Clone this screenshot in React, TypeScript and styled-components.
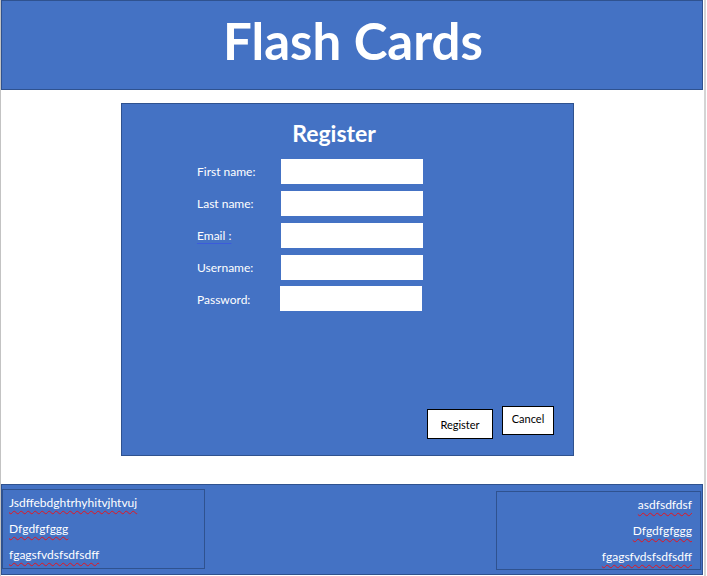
import React from "react";
import styled, { createGlobalStyle } from "styled-components";

const Global = createGlobalStyle`
  html, body { margin: 0; padding: 0; background: #ffffff; }
  body { font-family: Lato, "Open Sans", sans-serif; }
  * { box-sizing: border-box; }
`;

const BLUE = "#4472C4";
const DARK = "#2F528F";

const Page = styled.div`
  width: 706px;
  height: 576px;
  border-left: 1px solid #c3c3c3;
  border-right: 2px solid #d4d4d4;
  padding-right: 1px;
  display: flex;
  flex-direction: column;
`;

const Header = styled.header`
  height: 90px;
  background: ${BLUE};
  border: 1px solid ${DARK};
  display: flex;
  align-items: center;
  justify-content: center;
`;

const Title = styled.h1`
  margin: 0;
  color: #fff;
  font-family: Lato, sans-serif;
  font-weight: 700;
  font-size: 51px;
  line-height: 1;
  padding: 0 0 9px 2px;
`;

const Main = styled.main`
  height: 394px;
  padding: 13px 0 0 120px;
`;

const Panel = styled.section`
  width: 453px;
  height: 353px;
  background: ${BLUE};
  border: 1px solid ${DARK};
  display: flex;
  flex-direction: column;
  padding: 12px 19px 16px 75px;
`;

const PanelTitle = styled.h2`
  margin: 0 0 9px -75px;
  width: 452px;
  text-align: center;
  color: #fff;
  font-weight: 700;
  font-size: 23px;
  line-height: 34px;
  padding-right: 28px;
`;

const Form = styled.div`
  display: grid;
  grid-template-columns: 84px 142px;
  grid-template-rows: 25px 25px 25px 25px 25px;
  row-gap: 7px;
  align-items: center;
`;

const Label = styled.label<{ $grammar?: boolean }>`
  color: #fff;
  font-size: 12px;
  line-height: 25px;
  span {
    text-decoration: ${(p) => (p.$grammar ? "underline solid #3b5bdb" : "none")};
    text-underline-offset: 3px;
  }
`;

const Field = styled.div<{ $shift?: number }>`
  width: 142px;
  height: 25px;
  background: #fff;
  margin-left: ${(p) => p.$shift ?? 0}px;
  margin-top: ${(p) => (p.$shift ? -2 : 0)}px;
`;

const Buttons = styled.div`
  margin-top: auto;
  display: flex;
  justify-content: flex-end;
  align-items: flex-start;
  gap: 9px;
`;

const Button = styled.button<{ $w: number; $h: number; $top?: number; $pt?: number }>`
  width: ${(p) => p.$w}px;
  height: ${(p) => p.$h}px;
  margin-top: ${(p) => p.$top ?? 0}px;
  background: #fff;
  border: 1px solid #000;
  color: #000;
  font-family: Lato, sans-serif;
  font-size: 11px;
  padding: ${(p) => p.$pt ?? 0}px 0 0 0;
  display: flex;
  align-items: ${(p) => (p.$pt ? "flex-start" : "center")};
  justify-content: center;
`;

const Footer = styled.footer`
  height: 91px;
  background: ${BLUE};
  border: 1px solid ${DARK};
  display: flex;
  justify-content: space-between;
  align-items: flex-start;
  padding: 4px 1px 0 0;
`;

const Box = styled.div<{ $right?: boolean; $top?: number }>`
  width: ${(p) => (p.$right ? 205 : 203)}px;
  height: ${(p) => (p.$right ? 79 : 80)}px;
  margin-top: ${(p) => p.$top ?? 0}px;
  border: 1px solid ${DARK};
  padding: ${(p) => (p.$right ? "0 8px 0 0" : "0 0 0 6px")};
  text-align: ${(p) => (p.$right ? "right" : "left")};
  display: flex;
  flex-direction: column;
`;

const Line = styled.div`
  color: #fff;
  font-size: 12px;
  line-height: 26px;
  span {
    text-decoration: underline wavy #e8141c;
    text-decoration-thickness: 1px;
    text-underline-offset: 3px;
  }
`;

const fields = [
  { label: "First name:" },
  { label: "Last name:" },
  { label: "Email :", grammar: true },
  { label: "Username:" },
  { label: "Password:", shift: -1 },
];

export default function App() {
  return (
    <>
      <Global />
      <Page>
        <Header>
          <Title>Flash Cards</Title>
        </Header>
        <Main>
          <Panel>
            <PanelTitle>Register</PanelTitle>
            <Form>
              {fields.map((f) => (
                <React.Fragment key={f.label}>
                  <Label $grammar={f.grammar}>
                    <span>{f.label}</span>
                  </Label>
                  <Field $shift={f.shift} />
                </React.Fragment>
              ))}
            </Form>
            <Buttons>
              <Button $w={66} $h={30} $top={3}>Register</Button>
              <Button $w={52} $h={29} $pt={5}>Cancel</Button>
            </Buttons>
          </Panel>
        </Main>
        <Footer>
          <Box>
            <Line><span>Jsdffebdghtrhyhitvjhtvuj</span></Line>
            <Line><span>Dfgdfgfggg</span></Line>
            <Line><span>fgagsfvdsfsdfsdff</span></Line>
          </Box>
          <Box $right $top={2}>
            <Line><span>asdfsdfdsf</span></Line>
            <Line><span>Dfgdfgfggg</span></Line>
            <Line><span>fgagsfvdsfsdfsdff</span></Line>
          </Box>
        </Footer>
      </Page>
    </>
  );
}
